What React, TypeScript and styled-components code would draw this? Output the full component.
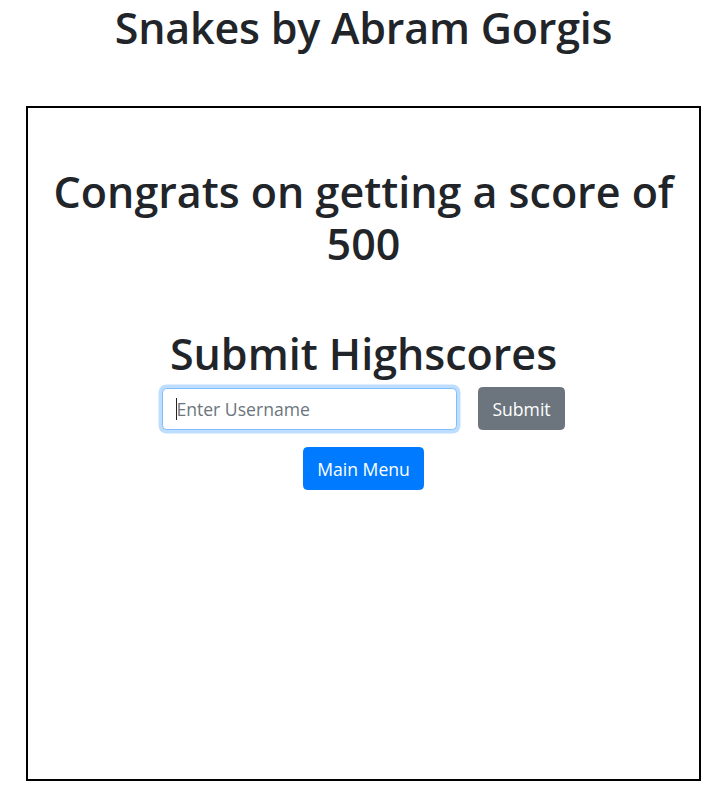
import styled, { createGlobalStyle } from 'styled-components';

const GlobalStyle = createGlobalStyle`
	html {
		font-size: 17.6px;
	}

	body {
		margin: 0;
		background: #fff;
		color: #212529;
		font-family: "Open Sans", "Noto Sans", sans-serif;
		line-height: 1.5;
	}

	* {
		box-sizing: border-box;
	}
`;

const Page = styled.div`
	width: 716px;
	text-align: center;
	padding: 2px 0 0 11px;
`;

const Title = styled.h1`
	margin: 0 0 52px;
	font-size: 43px;
	font-weight: 600;
	letter-spacing: -0.2px;
	line-height: 1.2;
`;

const GameBoard = styled.div`
	width: 675px;
	height: 675px;
	margin: 0 auto;
	border: 2px solid #000;
	padding: 58px 20px 0;
`;

const Heading = styled.h1<{ $gap?: number }>`
	margin: 0 0 ${(props) => props.$gap ?? 0}px;
	font-size: 43px;
	font-weight: 600;
	letter-spacing: 0;
	line-height: 1.23;
`;

const FormRow = styled.form`
	display: flex;
	justify-content: center;
	align-items: center;
	gap: 21px;
	margin-top: 6px;
`;

const InputWrap = styled.div`
	position: relative;
`;

const TextInput = styled.input`
	display: block;
	width: 295px;
	height: 42px;
	padding: 6.6px 13.2px;
	font-family: inherit;
	font-size: 1rem;
	color: #495057;
	background: #fff;
	border: 1px solid #80bdff;
	border-radius: 4.4px;
	box-shadow: 0 0 0 3.5px rgba(0, 123, 255, 0.25);
	outline: none;

	&::placeholder {
		color: #6c757d;
	}
`;

const Caret = styled.span`
	position: absolute;
	left: 14px;
	top: 10px;
	width: 1px;
	height: 22px;
	background: #212529;
`;

const Button = styled.button<{ $variant: 'primary' | 'secondary' }>`
	display: inline-block;
	height: 43px;
	padding: 0 13.2px;
	font-family: inherit;
	font-size: 1rem;
	line-height: 1.5;
	color: #fff;
	background: ${(props) => (props.$variant === 'primary' ? '#007bff' : '#6c757d')};
	border: 1px solid ${(props) => (props.$variant === 'primary' ? '#007bff' : '#6c757d')};
	border-radius: 4.4px;
	cursor: pointer;
`;

const MenuRow = styled.div`
	display: flex;
	justify-content: center;
	margin-top: 17px;
`;

const App = () => {
	return (
		<>
			<GlobalStyle />
			<Page>
				<Title>Snakes by Abram Gorgis</Title>
				<GameBoard>
					<Heading $gap={57}>Congrats on getting a score of 500</Heading>
					<Heading>Submit Highscores</Heading>
					<FormRow onSubmit={(e) => e.preventDefault()}>
						<InputWrap>
							<TextInput type="text" placeholder="Enter Username" />
							<Caret />
						</InputWrap>
						<Button $variant="secondary" type="submit">Submit</Button>
					</FormRow>
					<MenuRow>
						<Button $variant="primary" type="button">Main Menu</Button>
					</MenuRow>
				</GameBoard>
			</Page>
		</>
	)
};

export default App;
